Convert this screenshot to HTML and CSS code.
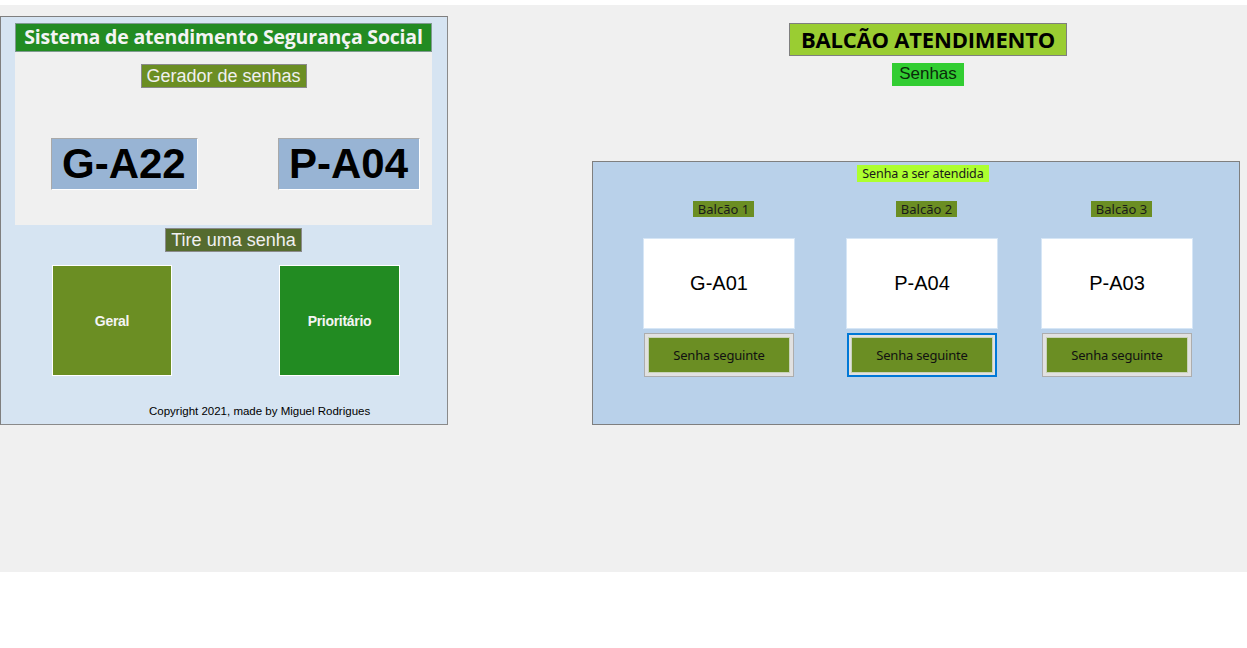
FILE: index.html
```html
<!DOCTYPE html>
<html lang="pt">
<head>
<meta charset="utf-8">
<title>Sistema de atendimento</title>
<link rel="stylesheet" href="styles.css">
</head>
<body>
<div class="form">
  <section class="gen-panel">
    <div class="title">Sistema de atendimento Segurança Social</div>
    <div class="gen-area">
      <div class="label gen-label">Gerador de senhas</div>
      <div class="tickets">
        <div class="ticket t-g">G-A22</div>
        <div class="ticket t-p">P-A04</div>
      </div>
    </div>
    <div class="label take-label">Tire uma senha</div>
    <div class="take-buttons">
      <div class="big-btn geral">Geral</div>
      <div class="big-btn prio">Prioritário</div>
    </div>
    <div class="copyright">Copyright 2021, made by Miguel Rodrigues</div>
  </section>

  <section class="counter-col">
    <div class="counter-head">
      <div class="head-title">BALCÃO ATENDIMENTO</div>
      <div class="head-sub">Senhas</div>
    </div>
    <div class="counter-panel">
      <div class="current-label">Senha a ser atendida</div>
      <div class="counters">
        <div class="counter c1">
          <div class="counter-name">Balcão 1</div>
          <div class="counter-box">G-A01</div>
          <div class="next-btn"><span>Senha seguinte</span></div>
        </div>
        <div class="counter c2">
          <div class="counter-name">Balcão 2</div>
          <div class="counter-box">P-A04</div>
          <div class="next-btn focused"><span>Senha seguinte</span></div>
        </div>
        <div class="counter c3">
          <div class="counter-name">Balcão 3</div>
          <div class="counter-box">P-A03</div>
          <div class="next-btn"><span>Senha seguinte</span></div>
        </div>
      </div>
    </div>
  </section>
</div>
</body>
</html>
```

FILE: styles.css
```css
* { box-sizing: border-box; }
html, body { margin: 0; padding: 0; background: #ffffff; }
body { font-family: "Liberation Sans", Arial, sans-serif; }

.form {
  margin-top: 5px;
  height: 567px;
  background: #f0f0f0;
  display: flex;
  align-items: flex-start;
  padding-top: 11px;
}

/* ---------- left panel ---------- */
.gen-panel {
  width: 448px;
  height: 409px;
  background: #d6e4f2;
  border: 1px solid #7f7f7f;
  border-right-color: #8a8a8a;
  border-bottom-color: #8a8a8a;
  padding: 6px 0 0 14px;
  display: flex;
  flex-direction: column;
}
.title {
  width: 417px;
  height: 29px;
  background: #228b22;
  border: 1px solid #7f9a90;
  color: #f4f4f4;
  font-family: "Open Sans", "Noto Sans", sans-serif;
  font-weight: 700;
  font-size: 19.5px;
  line-height: 26px;
  text-align: center;
  white-space: nowrap;
  letter-spacing: -0.2px;
}
.gen-area {
  width: 417px;
  height: 173px;
  background: #f0f0f0;
  display: flex;
  flex-direction: column;
  align-items: center;
  padding-top: 12px;
}
.label {
  border: 1px solid #8a8a8a;
  color: #f0f0f0;
  font-size: 18px;
  line-height: 22px;
  white-space: nowrap;
}
.gen-label {
  width: 166px;
  height: 24px;
  background: #6b8e23;
  text-align: center;
}
.tickets {
  align-self: stretch;
  display: flex;
  justify-content: space-between;
  padding: 0 12px 0 36px;
  margin-top: 50px;
}
.ticket {
  height: 52px;
  background: #98b4d4;
  border: 1px solid #a9a9a9;
  border-right-color: #ffffff;
  border-bottom-color: #ffffff;
  font-weight: 700;
  font-size: 42px;
  line-height: 50px;
  color: #000;
  padding-left: 10px;
  white-space: nowrap;
}
.t-g { width: 147px; }
.t-p { width: 142px; }
.take-label {
  width: 137px;
  height: 24px;
  background: #556b2f;
  margin: 3px 0 0 150px;
  text-align: center;
}
.take-buttons {
  display: flex;
  margin-top: 13px;
  padding-left: 37px;
}
.big-btn {
  height: 111px;
  border: 1px solid #ffffff;
  color: #f4f4f4;
  font-weight: 700;
  font-size: 14px;
  display: flex;
  align-items: center;
  justify-content: center;
  letter-spacing: -0.3px;
}
.geral { width: 120px; background: #6b8e23; }
.prio { width: 121px; background: #228b22; margin-left: 107px; }
.copyright {
  margin: 29px 0 0 134px;
  font-size: 11.5px;
  color: #000;
  white-space: nowrap;
}

/* ---------- right side ---------- */
.counter-col {
  margin-left: 144px;
  width: 648px;
  display: flex;
  flex-direction: column;
}
.counter-head {
  display: flex;
  flex-direction: column;
  align-items: center;
  padding: 7px 0 0 24px;
}
.head-title {
  width: 278px;
  height: 33px;
  background: #9acd32;
  border: 1px solid #7f7f7f;
  font-family: "Open Sans", "Noto Sans", sans-serif;
  font-weight: 700;
  font-size: 22px;
  line-height: 30px;
  text-align: center;
  color: #000;
  white-space: nowrap;
  letter-spacing: -0.2px;
}
.head-sub {
  margin-top: 7px;
  width: 72px;
  height: 23px;
  background: #32cd32;
  font-size: 17px;
  line-height: 22px;
  text-align: center;
  color: #0a2a0a;
}
.counter-panel {
  margin-top: 75px;
  width: 648px;
  height: 264px;
  background: #b9d1ea;
  border: 1px solid #7f7f7f;
  display: flex;
  flex-direction: column;
}
.current-label {
  align-self: flex-start;
  margin: 3px 0 0 264px;
  height: 17px;
  width: 132px;
  background: #adff2f;
  font-family: "Noto Sans", "Open Sans", sans-serif;
  font-size: 12.5px;
  line-height: 17px;
  text-align: center;
  color: #1a1a1a;
  letter-spacing: -0.1px;
  white-space: nowrap;
}
.counters {
  display: flex;
  padding-left: 50px;
  margin-top: 19px;
}
.counter {
  width: 152px;
  display: flex;
  flex-direction: column;
  align-items: center;
}
.c2 { margin-left: 51px; }
.c3 { margin-left: 43px; }
.counter-name {
  margin-left: 9px;
  width: 61px;
  height: 16px;
  background: #6b8e23;
  font-family: "Noto Sans", "Open Sans", sans-serif;
  font-size: 13px;
  line-height: 16px;
  text-align: center;
  color: #1a1a1a;
  white-space: nowrap;
}
.counter-box {
  margin-top: 21px;
  width: 152px;
  height: 91px;
  background: #ffffff;
  border: 1px solid #d6e6f6;
  font-size: 20px;
  line-height: 88px;
  text-align: center;
  color: #000;
}
.next-btn {
  margin-top: 4px;
  width: 150px;
  height: 44px;
  background: #e1e1e1;
  border: 1px solid #adadad;
  padding: 3px;
  display: flex;
}
.next-btn span {
  flex: 1;
  background: #6b8e23;
  border: 1px solid #c9d2b9;
  font-family: "Noto Sans", "Open Sans", sans-serif;
  font-size: 13px;
  letter-spacing: -0.2px;
  color: #111;
  display: flex;
  align-items: center;
  justify-content: center;
  white-space: nowrap;
}
.next-btn.focused {
  border: 2px solid #0078d7;
  padding: 2px;
}
```
